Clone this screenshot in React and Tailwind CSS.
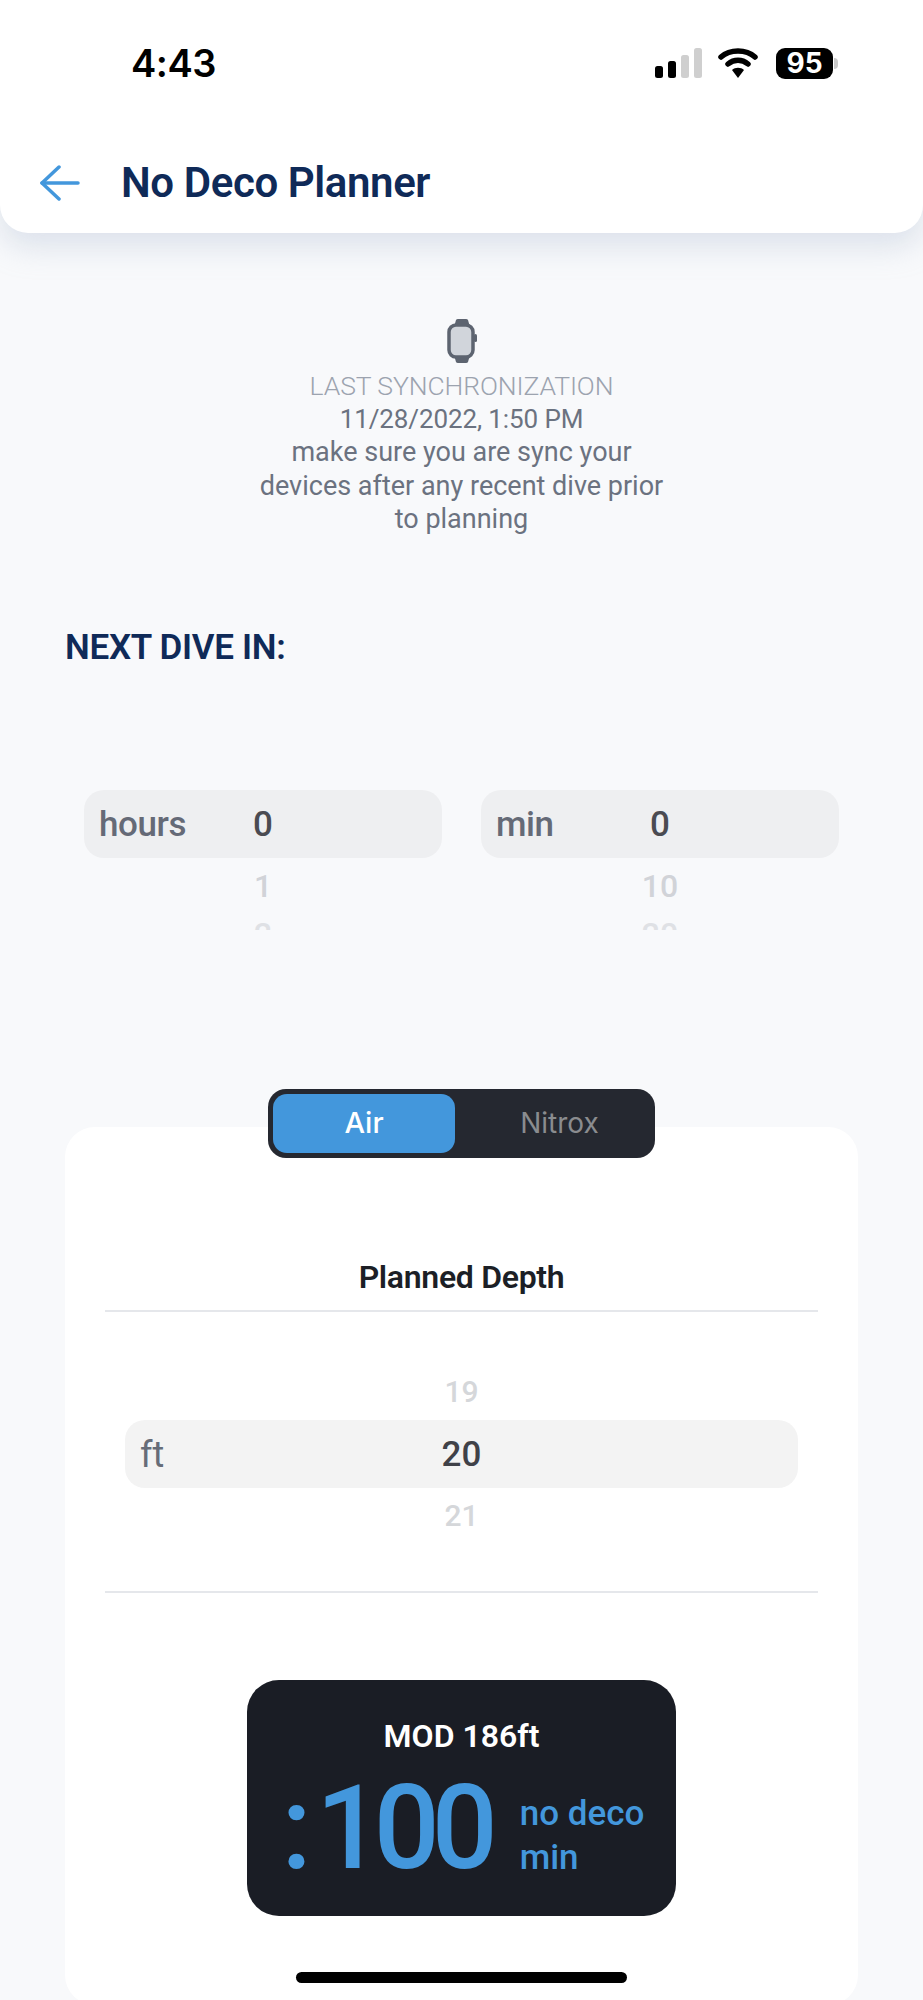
function Wheel({ label, value, next, after }) {
  return (
    <div className="w-[358px] h-[140px] overflow-hidden">
      <div className="h-[68px] rounded-[20px] bg-[#eeeff1] flex items-center pl-[15px] pt-[4px] relative">
        <span className="text-[35px] font-medium text-[#656a77] tracking-[-0.4px]">{label}</span>
        <span className="absolute left-[164px] w-[30px] text-center text-[35px] font-medium text-[#4a4b52]">{value}</span>
      </div>
      <div className="ml-[134px] w-[90px] text-center text-[32px] font-medium text-[#d1d3d8] h-[56px] flex items-center justify-center">{next}</div>
      <div className="ml-[134px] w-[90px] text-center text-[32px] font-medium text-[#dfe1e5] leading-[40px]">{after}</div>
    </div>
  );
}

export default function App() {
  return (
    <div className="h-[2000px] overflow-hidden bg-[#f8f9fb] flex flex-col relative font-['Roboto',sans-serif]">
      {/* header */}
      <div className="h-[233px] shrink-0 bg-white rounded-b-[28px] shadow-[0_14px_30px_rgba(170,182,205,0.35)] flex flex-col">
        <div className="h-[126px] flex items-start justify-between pl-[131px] pr-[81px] pt-[43px]">
          <span className="text-[38px] font-semibold leading-[40px] text-black font-['Inter',sans-serif] tracking-[-0.5px]">4:43</span>
          <div className="flex items-center h-[40px]">
            <svg width="48" height="30" viewBox="0 0 48 30">
              <rect x="0" y="18" width="8" height="12" rx="2.500" fill="#000" />
              <rect x="13" y="13" width="8" height="17" rx="2.500" fill="#000" />
              <rect x="26" y="7" width="8" height="23" rx="2.500" fill="#cfcfcf" />
              <rect x="39" y="0" width="8" height="30" rx="2.500" fill="#cfcfcf" />
            </svg>
            <svg width="40" height="30" viewBox="0 0 40 30" className="ml-[15px]">
              <path d="M3 9 C12 1 28 1 37 9" fill="none" stroke="#000" strokeWidth="5.500" strokeLinecap="round" />
              <path d="M10 16 C16 11 24 11 30 16" fill="none" stroke="#000" strokeWidth="5.500" strokeLinecap="round" />
              <path d="M14 22 C17 19 23 19 26 22 L20 30 Z" fill="#000" />
            </svg>
            <div className="flex items-center ml-[18px]">
              <div className="w-[57px] h-[31px] rounded-[9px] bg-black flex items-center justify-center text-white text-[28px] font-bold font-['Inter',sans-serif] leading-none">95</div>
              <div className="w-[9px] h-[11px] flex items-center">
                <div className="w-[4px] h-[11px] rounded-r-full bg-[#c9c9c9] ml-[1px]"></div>
              </div>
            </div>
          </div>
        </div>
        <div className="flex items-center pl-[40px] mt-[27px] h-[60px]">
          <svg width="40" height="36" viewBox="0 0 40 36" fill="none" stroke="#4397dc" strokeWidth="3.500" strokeLinecap="round" strokeLinejoin="round">
            <path d="M2 18 H38" />
            <path d="M19 2 L2 18 L19 34" />
          </svg>
          <span className="ml-[41px] text-[42px] font-semibold text-[#0f2a58] leading-[60px] tracking-[-0.4px]">No Deco Planner</span>
        </div>
      </div>

      {/* sync info */}
      <div className="flex flex-col items-center mt-[86px]">
        <svg width="30" height="44" viewBox="0 0 30 44">
          <path d="M7 8 L9 1 Q9.500 0 11 0 H19 Q20.500 0 21 1 L23 8 Z M7 36 L9 43 Q9.500 44 11 44 H19 Q20.500 44 21 43 L23 36 Z" fill="#5d6470" />
          <rect x="2" y="6" width="24" height="32" rx="7" fill="#d1d5db" stroke="#5d6470" strokeWidth="3.500" />
          <rect x="27" y="15" width="3" height="8" rx="1.500" fill="#5d6470" />
        </svg>
        <div className="mt-[6px] text-center leading-[33.5px] text-[#6b7280] w-[420px]">
          <div className="text-[26.5px] font-light tracking-[-0.1px] text-[#9ca3af]">LAST SYNCHRONIZATION</div>
          <div className="text-[26px] tracking-[-0.1px]">11/28/2022, 1:50 PM</div>
          <div className="text-[27px] tracking-[0px]">make sure you are sync your devices after any recent dive prior to planning</div>
        </div>
      </div>

      <div className="pl-[65px] mt-[91px] text-[35px] font-semibold text-[#0f2a58] leading-[40px] tracking-[-0.3px]">NEXT DIVE IN:</div>

      {/* time wheels */}
      <div className="flex justify-center gap-[39px] mt-[122px]">
        <Wheel label="hours" value="0" next="1" after="2" />
        <Wheel label="min" value="0" next="10" after="20" />
      </div>

      {/* gas card */}
      <div className="relative mt-[197px] mx-[65px] h-[878px] shrink-0 bg-white rounded-[30px] flex flex-col">
        <div className="absolute -top-[38px] left-[203px] w-[387px] h-[69px] rounded-[18px] bg-[#252830] p-[5px] flex">
          <div className="w-[182px] rounded-[14px] bg-[#4397dc] flex items-center justify-center text-[29px] text-white font-['Inter',sans-serif] font-medium">Air</div>
          <div className="flex-1 flex items-center justify-center pl-[14px] text-[28px] text-[#8a8c8f] font-['Inter',sans-serif]">Nitrox</div>
        </div>

        <div className="pt-[126px] text-center text-[32px] font-semibold text-[#1c1f26] leading-[48px] tracking-[-0.3px]">Planned Depth</div>
        <div className="mx-[40px] mt-[9px] h-[2px] bg-[#e5e7eb]"></div>

        <div className="mt-[49px] flex flex-col items-center">
          <div className="h-[62px] flex items-center text-[30px] font-medium text-[#d5d7da]">19</div>
          <div className="w-[673px] h-[68px] -my-[3px] rounded-[20px] bg-[#f3f3f3] flex items-center pt-[3px] relative">
            <span className="pl-[15px] text-[36px] text-[#666c78]">ft</span>
            <span className="absolute inset-x-0 text-center text-[35px] font-medium text-[#3f4148]">20</span>
          </div>
          <div className="h-[62px] flex items-center text-[30px] font-medium text-[#d5d7da]">21</div>
        </div>

        <div className="mx-[40px] mt-[44px] h-[2px] bg-[#e5e7eb]"></div>

        <div className="mt-[87px] self-center w-[429px] h-[236px] rounded-[32px] bg-[#1a1d25] flex flex-col items-center">
          <div className="mt-[34px] text-[32px] font-semibold text-white leading-[44px]">MOD 186ft</div>
          <div className="flex items-end mt-[12px] ml-[8px] text-[#4397dc]">
            <span className="text-[116px] font-medium leading-[116px]">:</span>
            <span className="ml-[4px] text-[116px] font-medium leading-[116px] tracking-[-8px]">100</span>
            <span className="ml-[30px] mb-[6px] text-[35px] font-medium leading-[44px] w-[130px]">no deco min</span>
          </div>
        </div>
      </div>

      {/* home indicator */}
      <div className="absolute left-[296px] top-[1972px] w-[331px] h-[11px] rounded-full bg-black"></div>
    </div>
  );
}
